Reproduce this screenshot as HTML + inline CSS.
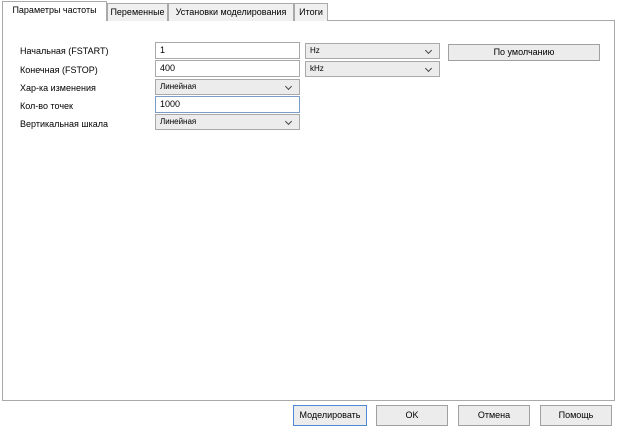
<!DOCTYPE html>
<html><head><meta charset="utf-8"><style>
*{box-sizing:border-box;margin:0;padding:0}
body{width:619px;height:431px;background:#fff;font-family:"Liberation Sans","DejaVu Sans",sans-serif;font-size:9px;color:#000;position:relative;overflow:hidden}
.a{position:absolute}
.panel{left:2px;top:20px;width:613px;height:381px;border:1px solid #a9a9a9}
.tab{top:3px;height:18px;border:1px solid #a9a9a9;border-bottom:none;background:#f0f0f0;line-height:16px;text-align:center;font-size:9px}
.tab.s{top:1px;height:20px;background:#fff;z-index:2}
.lbl{left:20px;font-size:9px}
.inp{border:1px solid #a9a9a9;background:#fff;padding-left:4px;line-height:14px;font-size:9px}
.cmb{border:1px solid #a9a9a9;background:#ececec;padding-left:4px;line-height:14px;font-size:8px}
.cmb:after{content:"";position:absolute;right:8px;top:4px;width:4px;height:4px;border-right:1.5px solid #444;border-bottom:1.5px solid #444;transform:rotate(45deg)}
.btn{border:1px solid #a0a0a0;background:#ececec;text-align:center;font-size:9px}
</style></head><body>
<div class="a panel"></div>
<div class="a tab s" style="left:2px;width:105px">Параметры частоты</div>
<div class="a tab" style="left:107px;width:61px">Переменные</div>
<div class="a tab" style="left:168px;width:126px">Установки моделирования</div>
<div class="a tab" style="left:294px;width:34px">Итоги</div>

<div class="a lbl" style="top:46px">Начальная (FSTART)</div>
<div class="a lbl" style="top:65px">Конечная (FSTOP)</div>
<div class="a lbl" style="top:83px">Хар-ка изменения</div>
<div class="a lbl" style="top:101px">Кол-во точек</div>
<div class="a lbl" style="top:119px">Вертикальная шкала</div>

<div class="a inp" style="left:155px;top:42px;width:145px;height:17px">1</div>
<div class="a inp" style="left:155px;top:60px;width:145px;height:17px">400</div>
<div class="a cmb" style="left:155px;top:79px;width:145px;height:16px">Линейная</div>
<div class="a inp" style="left:155px;top:96px;width:145px;height:17px;border-color:#7a9cc6">1000</div>
<div class="a cmb" style="left:155px;top:114px;width:145px;height:16px">Линейная</div>

<div class="a cmb" style="left:305px;top:43px;width:135px;height:16px">Hz</div>
<div class="a cmb" style="left:305px;top:61px;width:135px;height:16px">kHz</div>
<div class="a btn" style="left:448px;top:44px;width:152px;height:17px;line-height:15px">По умолчанию</div>

<div class="a btn" style="left:293px;top:405px;width:74px;height:21px;line-height:19px;border-color:#4a8ad6">Моделировать</div>
<div class="a btn" style="left:376px;top:405px;width:72px;height:21px;line-height:19px">OK</div>
<div class="a btn" style="left:458px;top:405px;width:72px;height:21px;line-height:19px">Отмена</div>
<div class="a btn" style="left:540px;top:405px;width:72px;height:21px;line-height:19px">Помощь</div>
</body></html>
